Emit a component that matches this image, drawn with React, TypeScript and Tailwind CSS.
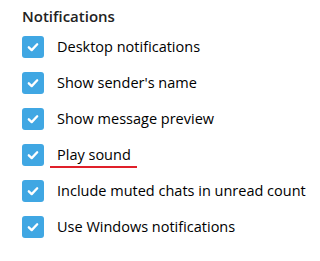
import React from "react";

const items = [
  "Desktop notifications",
  "Show sender's name",
  "Show message preview",
  "Play sound",
  "Include muted chats in unread count",
  "Use Windows notifications",
];

function Check() {
  return (
    <div className="w-[22px] h-[22px] rounded-[3px] bg-[#40a7e3] flex items-center justify-center shrink-0">
      <svg width="14" height="14" viewBox="0 0 14 14" fill="none">
        <path d="M2.8 7.3 L5.7 10.1 L11.2 4.3" stroke="white" strokeWidth="2.3" strokeLinecap="round" strokeLinejoin="round" />
      </svg>
    </div>
  );
}

export default function App() {
  return (
    <div className="w-[320px] h-[261px] bg-white pl-[22px] pt-[5px]" style={{ fontFamily: '"Open Sans", sans-serif' }}>
      <div className="text-[15px] font-semibold text-[#222] leading-[22px]">Notifications</div>
      <div className="flex flex-col mt-[9px] gap-[14px]">
        {items.map((t) => (
          <div key={t} className="flex items-center gap-[13px] h-[22px]">
            <Check />
            {t === "Play sound" ? (
              <span className="relative text-[14.5px] text-[#000] leading-[20px]">
                {t}
                <span className="absolute left-[-7px] w-[87px] top-[21px] h-[2px] bg-[#e0202a]" />
              </span>
            ) : (
              <span className="text-[14.5px] text-[#000] leading-[20px]">{t}</span>
            )}
          </div>
        ))}
      </div>
    </div>
  );
}
